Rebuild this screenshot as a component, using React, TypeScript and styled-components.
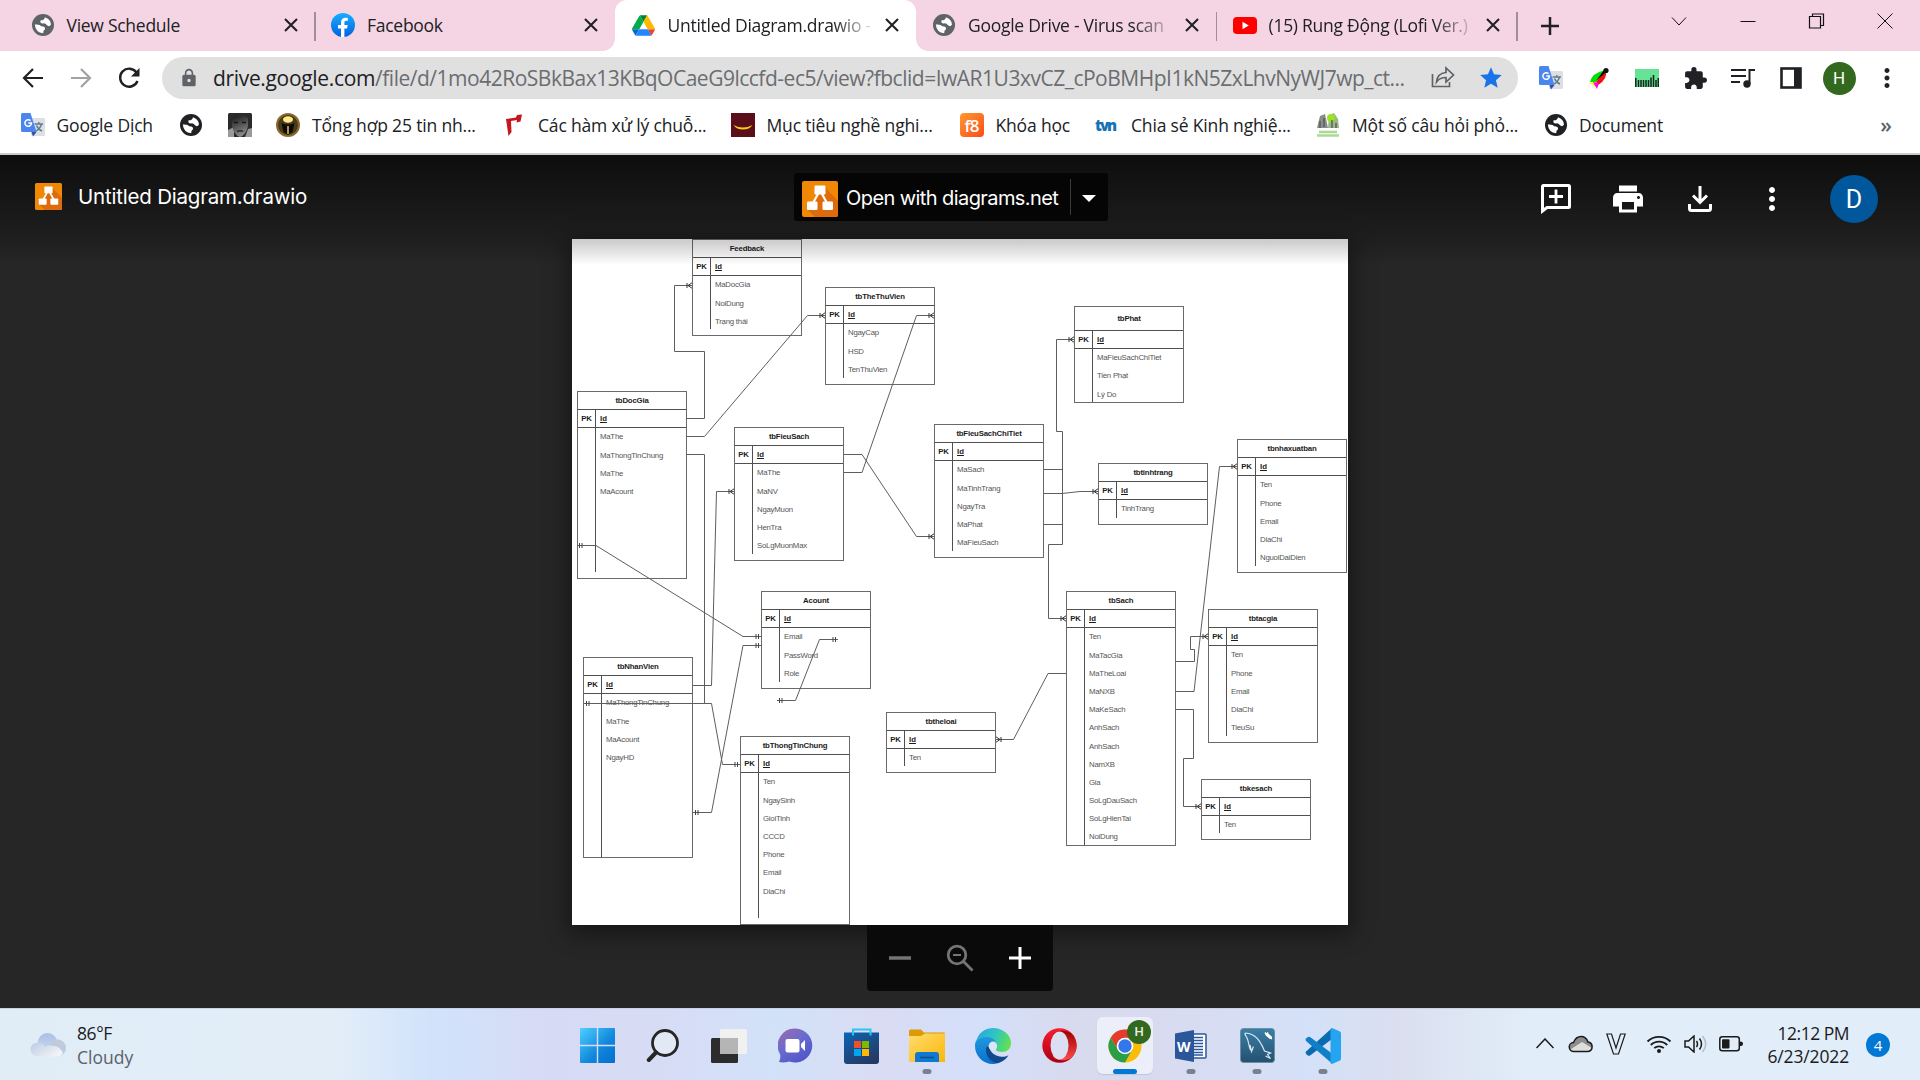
import React from "react";
import styled, { createGlobalStyle, css } from "styled-components";
import { MdExtension, MdLock, MdMoreVert, MdPrint, MdStar } from "react-icons/md";

const UI_FONT = `"Open Sans", "Noto Sans", sans-serif`;

const GlobalStyle = createGlobalStyle`
  * { box-sizing: border-box; }
  body { margin: 0; background: #262626; font-family: ${UI_FONT}; overflow: hidden; }
  svg { display: block; flex: none; }
`;

const Screen = styled.div`
  width: 1920px;
  height: 1080px;
  display: flex;
  flex-direction: column;
`;

/* ---------- Tab strip ---------- */

const TabStrip = styled.div`
  height: 51px;
  flex: none;
  display: flex;
  background: #f5d5e3;
  padding-left: 14px;
  color: #202124;
`;

const TabBox = styled.div<{ $active?: boolean; $divider?: boolean }>`
  position: relative;
  width: 300.5px;
  flex: none;
  display: flex;
  align-items: center;
  padding: 0 17px 1px 16.5px;
  ${(p) =>
    p.$active &&
    css`
      background: #fff;
      border-radius: 12px 12px 0 0;
      &::before,
      &::after {
        content: "";
        position: absolute;
        bottom: 0;
        width: 12px;
        height: 12px;
      }
      &::before {
        left: -12px;
        background: radial-gradient(circle at 0 0, transparent 11.5px, #fff 12px);
      }
      &::after {
        right: -12px;
        background: radial-gradient(circle at 100% 0, transparent 11.5px, #fff 12px);
      }
    `}
  ${(p) =>
    p.$divider &&
    css`
      &::after {
        content: "";
        position: absolute;
        right: -1px;
        top: 12px;
        width: 1.5px;
        height: 29px;
        background: #a18f98;
      }
    `}
`;

const TabIcon = styled.span`
  width: 24px;
  display: flex;
  justify-content: center;
  margin-right: 12px;
  flex: none;
`;

const TabTitle = styled.span<{ $fade?: boolean }>`
  flex: 1;
  font-size: 17.5px;
  letter-spacing: -0.27px;
  line-height: 26px;
  white-space: nowrap;
  ${(p) =>
    p.$fade &&
    css`
      mask-image: linear-gradient(90deg, #000 165px, rgba(0, 0, 0, 0.15) 202px);
    `}
`;

const StripTail = styled.div`
  flex: 1;
  display: flex;
  align-items: center;
  padding-left: 24px;
`;

const WindowButtons = styled.div`
  margin-left: auto;
  display: flex;
  padding: 0 26px 9px 0;
  gap: 50.5px;
`;

const CloseX = () => (
  <svg width="14" height="14" viewBox="0 0 14 14" stroke="#202124" strokeWidth="2.1">
    <path d="M1 1l12 12M13 1L1 13" />
  </svg>
);

/* ---------- Toolbar ---------- */

const Toolbar = styled.div`
  height: 54px;
  flex: none;
  display: flex;
  align-items: center;
  background: #fff;
  padding-left: 21px;
`;

const NavButtons = styled.div`
  display: flex;
  gap: 24px;
  width: 141px;
  flex: none;
`;

const Omnibox = styled.div`
  width: 1356px;
  height: 42px;
  flex: none;
  display: flex;
  align-items: center;
  border-radius: 21px;
  background: #e0e0e0;
  padding-left: 17px;
`;

const Url = styled.span`
  width: 1218px;
  margin-left: 14px;
  font-size: 21px;
  letter-spacing: -0.49px;
  line-height: 30px;
  white-space: nowrap;
  color: #6b6d70;
  b {
    font-weight: 400;
    letter-spacing: -0.33px;
    color: #202124;
  }
`;

const OmniActions = styled.div`
  display: flex;
  gap: 23px;
`;

const Extensions = styled.div`
  display: flex;
  align-items: center;
  margin-left: 9px;
`;

const Slot = styled.span`
  width: 48px;
  flex: none;
  display: flex;
  justify-content: center;
  align-items: center;
`;

const ProfileDot = styled.span`
  width: 33px;
  height: 33px;
  border-radius: 50%;
  background: #33691e;
  color: #fff;
  font: 400 17px/33px Roboto, sans-serif;
  text-align: center;
`;

/* ---------- Bookmarks ---------- */

const Bookmarks = styled.div`
  height: 50px;
  flex: none;
  display: flex;
  align-items: center;
  padding: 0 28px 8px 20.5px;
  gap: 24px;
  background: #fff;
  border-bottom: 2px solid #c9cbc9;
`;

const Bookmark = styled.span<{ $w: number }>`
  width: ${(p) => p.$w}px;
  flex: none;
  display: flex;
  align-items: center;
  gap: 12px;
  font-size: 17.5px;
  letter-spacing: -0.17px;
  line-height: 28px;
  white-space: nowrap;
  color: #202124;
`;

const Chevrons = styled.span`
  margin-left: auto;
  font-size: 21px;
  line-height: 20px;
  font-weight: 600;
  color: #5f6368;
`;

/* ---------- Viewer ---------- */

const Viewer = styled.main`
  position: relative;
  height: 853px;
  flex: none;
  display: flex;
  flex-direction: column;
  align-items: center;
  background: #262626;
`;

const TopShade = styled.div`
  position: absolute;
  z-index: 2;
  inset: 0 0 auto 0;
  height: 110px;
  pointer-events: none;
  background: linear-gradient(rgba(0, 0, 0, 0.65), rgba(0, 0, 0, 0.18) 80%, transparent);
`;

const ViewerHeader = styled.header`
  width: 100%;
  height: 84px;
  flex: none;
  z-index: 3;
  display: grid;
  grid-template-columns: 794px 314px 1fr;
  padding-top: 18px;
  color: #fff;
  font-family: Inter, "Open Sans", sans-serif;
`;

const FileName = styled.div`
  display: flex;
  align-items: center;
  height: 48px;
  padding: 0 0 1px 35px;
  gap: 16px;
  font-size: 20.5px;
  font-weight: 400;
  letter-spacing: -0.2px;
`;

const OpenWith = styled.div`
  height: 48px;
  display: flex;
  align-items: center;
  padding: 4px 8px 0;
  border-radius: 3px;
  background: #050505;
  font-size: 20px;
  font-weight: 400;
  letter-spacing: -0.58px;
  white-space: nowrap;
`;

const OpenLabel = styled.span`
  width: 224px;
  margin-left: 8px;
  line-height: 34px;
  padding-bottom: 2px;
`;

const OpenCaret = styled.span`
  height: 36px;
  margin-bottom: 4px;
  flex: 1;
  display: flex;
  align-items: center;
  padding: 3px 0 0 11px;
  border-left: 1.5px solid #3c3c3c;
`;

const ViewerActions = styled.div`
  display: flex;
  justify-content: flex-end;
  align-items: center;
  height: 52px;
  padding-right: 42px;
`;

const ActionSlot = styled.span`
  width: 72px;
  display: flex;
  justify-content: center;
  padding-bottom: 1px;
`;

const Account = styled.span`
  width: 48px;
  height: 48px;
  margin-left: 22px;
  border-radius: 50%;
  background: #01579b;
  font: 400 25px/49px Roboto, sans-serif;
  text-align: center;
`;

const Page = styled.section`
  position: relative;
  width: 776px;
  height: 686px;
  flex: none;
  overflow: hidden;
  background: #fff;
`;

const PageShadow = styled.div`
  box-shadow: 0 5px 22px 3px rgba(0, 0, 0, 0.45);
`;

const ZoomBar = styled.div`
  width: 186px;
  height: 66px;
  z-index: 1;
  display: flex;
  align-items: center;
  justify-content: space-between;
  padding: 0 22px;
  border-radius: 0 0 4px 4px;
  background: #0a0a0a;
`;

/* ---------- Diagram ---------- */

const Entity = styled.div<{ $x: number; $y: number; $h: number }>`
  position: absolute;
  left: ${(p) => p.$x}px;
  top: ${(p) => p.$y}px;
  width: 110px;
  height: ${(p) => p.$h}px;
  border: 1px solid #6a6a6a;
  display: flex;
  flex-direction: column;
  font: 7.8px/18.3px "Liberation Sans", Arial, sans-serif;
  color: #555;
`;

const EntityTitle = styled.div<{ $h: number }>`
  height: ${(p) => p.$h}px;
  line-height: ${(p) => p.$h}px;
  flex: none;
  text-align: center;
  font-weight: 700;
  font-size: 7.8px;
  letter-spacing: -0.18px;
  color: #1c1c1c;
  border-bottom: 1px solid #505050;
`;

const KeyRow = styled.div`
  height: 18.2px;
  flex: none;
  display: flex;
  font-weight: 700;
  color: #1c1c1c;
  border-bottom: 1px solid #505050;
`;

const KeyCell = styled.span`
  width: 18px;
  text-align: center;
  letter-spacing: -0.2px;
  border-right: 1px solid #505050;
`;

const KeyName = styled.span`
  padding-left: 4px;
  text-decoration: underline;
`;

const Fields = styled.div<{ $h: number }>`
  height: ${(p) => p.$h}px;
  margin-left: 17px;
  padding-left: 4px;
  border-left: 1px solid #505050;
`;

const Field = styled.div`
  height: 18.2px;
  letter-spacing: -0.23px;
`;

const Edges = styled.svg`
  position: absolute;
  inset: 0;
`;

type EntityData = { name: string; x: number; y: number; b: number; fields: string[]; head?: number; full?: boolean };

const ORIGIN_X = 572;
const ORIGIN_Y = 239;

const entities: EntityData[] = [
  { name: "Feedback", x: 692, y: 239, b: 336, fields: ["MaDocGia", "NoiDung", "Trạng thái"] },
  { name: "tbTheThuVien", x: 825, y: 287, b: 385, fields: ["NgayCap", "HSD", "TenThuVien"] },
  { name: "tbDocGia", x: 577, y: 391, b: 579, fields: ["MaThe", "MaThongTinChung", "MaThe", "MaAcount"] },
  { name: "tbFieuSach", x: 734, y: 427, b: 561, fields: ["MaThe", "MaNV", "NgayMuon", "HenTra", "SoLgMuonMax"] },
  { name: "tbFieuSachChiTiet", x: 934, y: 424, b: 558, fields: ["MaSach", "MaTinhTrang", "NgayTra", "MaPhat", "MaFieuSach"] },
  { name: "tbPhat", x: 1074, y: 306, b: 403, head: 24, full: true, fields: ["MaFieuSachChiTiet", "Tiền Phạt", "Lý Do"] },
  { name: "tbtinhtrang", x: 1098, y: 463, b: 525, fields: ["TinhTrang"] },
  { name: "tbnhaxuatban", x: 1237, y: 439, b: 573, fields: ["Ten", "Phone", "Email", "DiaChi", "NguoiDaiDien"] },
  { name: "Acount", x: 761, y: 591, b: 689, fields: ["Email", "PassWord", "Role"] },
  { name: "tbNhanVien", x: 583, y: 657, b: 858, full: true, fields: ["MaThongTinChung", "MaThe", "MaAcount", "NgayHD"] },
  { name: "tbThongTinChung", x: 740, y: 736, b: 925, fields: ["Ten", "NgaySinh", "GioiTinh", "CCCD", "Phone", "Email", "DiaChi"] },
  { name: "tbtheloai", x: 886, y: 712, b: 773, fields: ["Ten"] },
  {
    name: "tbSach", x: 1066, y: 591, b: 846, full: true,
    fields: ["Ten", "MaTacGia", "MaTheLoai", "MaNXB", "MaKeSach", "AnhSach", "AnhSach", "NamXB", "Gia", "SoLgDauSach", "SoLgHienTai", "NoiDung"],
  },
  { name: "tbtacgia", x: 1208, y: 609, b: 743, fields: ["Ten", "Phone", "Email", "DiaChi", "TieuSu"] },
  { name: "tbkesach", x: 1201, y: 779, b: 840, fields: ["Ten"] },
];

const connectors = [
  "686 418.5H704.5V351.5H674.5V285.5H692",
  "686 436.5H704.5L807.5 315.5H825",
  "686 454.5H704.5V703.5H584",
  "584 703.5H711.5L722.5 764.5H740",
  "693 685.5H711.5L716.5 491.5H734",
  "577 545.5H596L743 636.5H761",
  "761 645.5H743L711.5 812.5H693",
  "777 700.5H795.5L819.5 639.5H838",
  "844 454.5H862L916.5 536.5H934",
  "844 472.5H862L916.5 315.5H935",
  "1044 524.5H1062.5V431.5H1056.5V339.5H1074",
  "1044 469.5H1062.5V544.5H1048.5V618.5H1066",
  "1044 493.5H1062L1080 491.5H1098",
  "1066 673.5H1048L1013.5 739.5H996",
  "1176 661.5H1194.5V649.5H1190.5V636.5H1208",
  "1176 691.5H1194L1219.5 466.5H1237",
  "1176 709.5H1193.5V758.5H1183.5V806.5H1201",
];

/* End markers: x, y, and the side the connector arrives from. */
const crowFeet: [number, number, number][] = [
  [692, 285.5, -1], [825, 315.5, -1], [734, 491.5, -1], [934, 536.5, -1], [934, 315.5, -1],
  [1074, 339.5, -1], [1066, 618.5, -1], [1098, 491.5, -1], [996, 739.5, 1], [1208, 636.5, -1],
  [1237, 466.5, -1], [1201, 806.5, -1],
];
const doubleBars: [number, number, number][] = [
  [577, 545.5, 1], [584, 703.5, 1], [740, 764.5, -1], [761, 636.5, -1], [761, 645.5, -1],
  [693, 812.5, 1], [777, 700.5, 1], [838, 639.5, -1],
];

const Diagram = () => (
  <Page>
    {entities.map((e) => {
      const head = e.head ?? 18.2;
      const body = e.b - e.y - 2 - head - 18.2;
      return (
        <Entity key={e.name} $x={e.x - ORIGIN_X} $y={e.y - ORIGIN_Y} $h={e.b - e.y}>
          <EntityTitle $h={head}>{e.name}</EntityTitle>
          <KeyRow>
            <KeyCell>PK</KeyCell>
            <KeyName>Id</KeyName>
          </KeyRow>
          <Fields $h={e.full ? body : body - 5.5}>
            {e.fields.map((f, i) => (
              <Field key={i}>{f}</Field>
            ))}
          </Fields>
        </Entity>
      );
    })}
    <Edges width="776" height="686" viewBox={`${ORIGIN_X} ${ORIGIN_Y} 776 686`} fill="none" stroke="#5e5e5e" strokeWidth="1">
      {connectors.map((d) => (
        <path key={d} d={"M" + d} />
      ))}
      {crowFeet.map(([x, y, s]) => (
        <path key={`c${x}-${y}`} stroke="#333" d={`M${x + s * 5} ${y - 2.5}v5M${x} ${y - 2.7}L${x + s * 4} ${y}L${x} ${y + 2.7}`} />
      ))}
      {doubleBars.map(([x, y, s]) => (
        <path key={`b${x}-${y}`} stroke="#444" d={`M${x + s * 2.5} ${y - 2.5}v5M${x + s * 5} ${y - 2.5}v5`} />
      ))}
    </Edges>
  </Page>
);

/* ---------- Brand icons ---------- */

const GlobeIcon = ({ color }: { color: string }) => (
  <svg width="22" height="22" viewBox="0 0 22 22">
    <circle cx="11" cy="11" r="11" fill={color} />
    <path d="M13 3.200Q18.500 5 19 10.500Q17 13.500 14.800 11Q13.500 9 11 9.400Q7.500 9.500 8.600 6.300Q12.500 6.500 13 3.200z" fill="#fff" />
    <path d="M2.800 10.500Q8 10 9.300 12.300Q13.500 12.500 13 15.200Q10.800 16.500 11.200 19.200Q3.500 18.500 2.800 10.500z" fill="#fff" />
  </svg>
);

const DrawioLogo = ({ size }: { size: number }) => (
  <svg width={size} height={size} viewBox="0 0 36 36">
    <rect width="36" height="36" rx="2" fill="#f08705" />
    <path d="M22 5l14 15v14q0 2-2 2H13l-7-7 7-9z" fill="#df6c0c" />
    <path d="M17 11l-7 13M19 11l7 13" stroke="#fff" strokeWidth="2.2" />
    <rect x="12.5" y="4.500" width="11" height="9" rx="1.200" fill="#fff" />
    <rect x="5" y="20.500" width="10.500" height="8.500" rx="1.200" fill="#fff" />
    <rect x="20.500" y="20.500" width="10.500" height="8.500" rx="1.200" fill="#fff" />
  </svg>
);

const FacebookLogo = () => (
  <svg width="24" height="24" viewBox="0 0 24 24">
    <defs>
      <linearGradient id="fb" x2="0" y2="1">
        <stop stopColor="#19aeff" />
        <stop offset="1" stopColor="#0062e0" />
      </linearGradient>
    </defs>
    <circle cx="12" cy="12" r="12" fill="url(#fb)" />
    <path d="M10 24v-8.500H7V12h3V9.500C10 6.400 11.800 4.800 14.500 4.800c1 0 2.300.2 2.300.2v2.800h-1.500c-1.500 0-1.900.8-1.900 1.800V12h3.300l-.6 3.500h-2.700V24z" fill="#fff" />
  </svg>
);

const DriveLogo = () => (
  <svg width="23" height="23" viewBox="0 0 87.3 78">
    <path d="m6.6 66.850 3.850 6.650c.8 1.400 1.950 2.500 3.300 3.300l13.750-23.800h-27.500c0 1.550.4 3.100 1.200 4.500z" fill="#0066da" />
    <path d="m43.650 25-13.750-23.800c-1.350.8-2.500 1.900-3.300 3.300l-25.400 44a9 9 0 0 0-1.200 4.500h27.500z" fill="#00ac47" />
    <path d="m73.550 76.800c1.350-.8 2.500-1.900 3.300-3.300l1.600-2.750 7.650-13.250c.8-1.400 1.200-2.950 1.200-4.500h-27.500l5.850 11.500z" fill="#ea4335" />
    <path d="m43.650 25 13.750-23.800c-1.350-.8-2.900-1.200-4.500-1.200h-18.500c-1.600 0-3.150.45-4.500 1.200z" fill="#00832d" />
    <path d="m59.800 53h-32.300l-13.750 23.800c1.350.8 2.900 1.200 4.500 1.200h50.800c1.600 0 3.150-.45 4.500-1.200z" fill="#2684fc" />
    <path d="m73.400 26.500-12.700-22c-.8-1.400-1.950-2.500-3.300-3.300l-13.750 23.800 16.150 28h27.450c0-1.550-.4-3.100-1.200-4.500z" fill="#ffba00" />
  </svg>
);

const YouTubeLogo = () => (
  <svg width="24" height="17" viewBox="0 0 24 17">
    <rect width="24" height="17" rx="4" fill="#f00" />
    <path d="M9.500 4.800v7.400l6.300-3.700z" fill="#fff" />
  </svg>
);

const TranslateLogo = () => (
  <svg width="24" height="24" viewBox="0 0 24 24">
    <rect x="10" y="5" width="14" height="18" rx="1.500" fill="#dcdfe3" />
    <path d="M13.500 11h8.500M17.800 9v2M20.500 11c-.6 3-3 5.500-5.500 7M15.500 12.500c.8 2 3 4.500 5.500 5.500" stroke="#607d8b" strokeWidth="1.400" fill="none" />
    <path d="M1.500 0H9.500l6 19H1.500Q0 19 0 17.500v-16Q0 0 1.500 0z" fill="#4a86ee" />
    <path d="M10.500 19h5l-3.500 4.500z" fill="#3949ab" />
    <path d="M9.500 7.600A3.300 3.300 0 1 0 10.500 10H7.300" stroke="#fff" strokeWidth="1.500" fill="none" />
  </svg>
);

const FaceThumb = () => (
  <svg width="24" height="24" viewBox="0 0 24 24">
    <defs>
      <linearGradient id="face" x2=".3" y2="1">
        <stop stopColor="#161616" />
        <stop offset=".5" stopColor="#4e4e4e" />
        <stop offset="1" stopColor="#8a8a8a" />
      </linearGradient>
    </defs>
    <rect width="24" height="24" rx="1.500" fill="#2a2a2a" />
    <path d="M0 17l6-3v10H0zM24 15l-4 1-3 8h7z" fill="#9a9a9a" />
    <path d="M4 5q8-6 16 0v8q-2 9-8 11-6-2-8-11z" fill="url(#face)" />
    <path d="M6 9.500h4M14 9.500h4" stroke="#151515" strokeWidth="1.600" />
    <path d="M9 18.500q3.500-1.500 6 0" stroke="#2c2c2c" strokeWidth="1.500" fill="none" />
  </svg>
);

const BadgeThumb = () => (
  <svg width="24" height="24" viewBox="0 0 24 24">
    <circle cx="12" cy="12" r="12" fill="#8a6a2c" />
    <circle cx="12" cy="12" r="10" fill="#4a3a1a" />
    <ellipse cx="12" cy="6.500" rx="5" ry="3.200" fill="#ffe98a" />
    <path d="M5.500 10q6.500 3 13 0l-2 9-4.500 3-4.500-3z" fill="#0b0a08" />
    <path d="M12 13v8" stroke="#c4a050" strokeWidth="1.800" />
  </svg>
);

const RedFlag = () => (
  <svg width="24" height="24" viewBox="0 0 24 24">
    <path d="M4 6l10-1.500 1-2.500 5-.5-1.500 7-4 1 .5-2.500-6 1 .5 11-3 4z" fill="#c4161c" />
  </svg>
);

const Maroon = () => (
  <svg width="24" height="24" viewBox="0 0 24 24">
    <rect width="24" height="24" fill="#5c0d1a" />
    <path d="M2.500 12q9.500 5 19 0q-3 4.600-9.500 4.600t-9.500-4.600z" fill="#f3cf10" />
  </svg>
);

const LetterTile = styled.span`
  width: 24px;
  height: 24px;
  flex: none;
  border-radius: 4px;
  background: linear-gradient(135deg, #ff9a2e, #fb4b1c);
  color: #fff;
  font: 600 17px/25px "Open Sans", sans-serif;
  letter-spacing: -1px;
  text-align: center;
`;

const TvnMark = styled.span`
  width: 24px;
  flex: none;
  color: #1672b5;
  font: 800 15px/24px "Open Sans", sans-serif;
  letter-spacing: -2px;
`;

const CoupleThumb = () => (
  <svg width="24" height="24" viewBox="0 0 24 24">
    <path d="M1 15L4 3l5-2 3 14z" fill="#898e8a" />
    <path d="M12 15l1-13 5-2 4 6 1 9z" fill="#9ab78b" />
    <circle cx="15" cy="5" r="4" fill="#9be322" />
    <path d="M4 8v7M8 5v9M16 7v8M20 10v5" stroke="#555" strokeWidth="1.300" />
    <path d="M3 19h18M1 22.500h22" stroke="#a8da94" strokeWidth="2.500" />
  </svg>
);

/* ---------- Taskbar ---------- */

const Taskbar = styled.footer`
  height: 72px;
  flex: none;
  display: grid;
  grid-template-columns: 564px 793px 1fr;
  border-top: 1.500px solid #c8d2e2;
  background: linear-gradient(90deg, #e0edf7 0, #e2edf8 340px, #d1e3fb 430px, #d7daf4 550px, #d7dcf5 660px, #d2e2f9 775px, #d9dcf3 880px, #d4dffa 980px, #d8daed 1080px, #d8dcf2 1200px, #d4e1f8 1310px, #dbdff0 1400px, #e1edf8 1530px, #e1edf8);
`;

const Weather = styled.div`
  display: flex;
  align-items: center;
  padding: 0 0 0 30px;
  gap: 12px;
  font-size: 17.5px;
  line-height: 24.500px;
  color: #1b1b1b;
  letter-spacing: -0.4px;
`;

const WeatherText = styled.div`
  display: flex;
  flex-direction: column;
  padding-top: 1px;
  margin-left: -1px;
  span + span {
    color: #5c6268;
    letter-spacing: 0;
  }
`;

const Apps = styled.nav`
  display: flex;
`;

const AppSlot = styled.span<{ $state?: "open" | "active" }>`
  position: relative;
  width: 56px;
  height: 57px;
  margin: 8px 5px 0;
  flex: none;
  display: flex;
  align-items: center;
  justify-content: center;
  border-radius: 6px;
  ${(p) =>
    p.$state === "active" &&
    css`
      background: #eceffa;
      box-shadow: 0 1px 1px #c0c6da;
    `}
  ${(p) =>
    p.$state &&
    css`
      &::after {
        content: "";
        position: absolute;
        bottom: 0;
        left: 50%;
        transform: translateX(-50%);
        width: ${p.$state === "active" ? 24 : 9}px;
        height: 5px;
        border-radius: 3px;
        background: ${p.$state === "active" ? "#0078d4" : "#7a808c"};
      }
    `}
`;

const AppBadge = styled.span`
  position: absolute;
  right: 2px;
  top: 3px;
  width: 24px;
  height: 24px;
  border-radius: 50%;
  background: #33691e;
  color: #e8f0e4;
  font: 500 13px/24px Roboto, sans-serif;
  text-align: center;
`;

const Tray = styled.div`
  display: flex;
  align-items: center;
  justify-content: flex-end;
  padding: 0 30px 0 0;
`;

const TrayIcons = styled.div`
  display: flex;
  align-items: center;
  gap: 11px;
  padding-bottom: 2px;
`;

const Clock = styled.div`
  width: 106px;
  display: flex;
  flex-direction: column;
  align-items: flex-end;
  margin-right: 17px;
  font-size: 17.5px;
  line-height: 23px;
  letter-spacing: -0.5px;
  color: #1b1b1b;
  span + span {
    letter-spacing: -0.15px;
  }
`;

const Notice = styled.span`
  width: 24px;
  height: 24px;
  border-radius: 50%;
  background: #0078d4;
  color: #fff;
  font-size: 15px;
  line-height: 24px;
  text-align: center;
`;

const StartIcon = () => (
  <svg width="35" height="35" viewBox="0 0 35 35">
    <defs>
      <linearGradient id="win" x2="1" y2="1">
        <stop stopColor="#4cd0ff" />
        <stop offset=".6" stopColor="#1086dc" />
        <stop offset="1" stopColor="#0070cc" />
      </linearGradient>
    </defs>
    <path d="M1 0h15.800v16.800H0V1q0-1 1-1zM18.200 0H34q1 0 1 1v15.800H18.200zM0 18.200h16.800V35H1q-1 0-1-1zM18.200 18.200H35V34q0 1-1 1H18.200z" fill="url(#win)" />
  </svg>
);

const SearchIcon = () => (
  <svg width="34" height="36" viewBox="0 0 34 36" fill="none" stroke="#262626">
    <circle cx="19" cy="15" r="12.500" strokeWidth="2.800" fill="#e3e8f5" />
    <path d="M10 24.500L2.800 32" strokeWidth="4" strokeLinecap="round" />
  </svg>
);

const TaskViewIcon = () => (
  <svg width="36" height="34" viewBox="0 0 36 34">
    <rect x="0" y="9" width="27" height="25" rx="1.500" fill="#2c2c2c" />
    <rect x="9" y="0" width="27" height="25" rx="1.500" fill="#f1f1f1" />
    <path d="M9 9h18v16H10.500Q9 25 9 23.500z" fill="#b5b5b5" />
  </svg>
);

const ChatIcon = () => (
  <svg width="35" height="35" viewBox="0 0 35 35">
    <defs>
      <linearGradient id="chat" x1="0" y1="0" x2=".7" y2="1">
        <stop stopColor="#a06aa8" />
        <stop offset=".5" stopColor="#6a6bd0" />
        <stop offset="1" stopColor="#5055c8" />
      </linearGradient>
    </defs>
    <path d="M17.500.5a17 17 0 1 1-6 33Q5 35 1 34q2-4 1-8A17 17 0 0 1 17.500.5z" fill="url(#chat)" />
    <rect x="7.500" y="11" width="14" height="13.500" rx="2" fill="#fff" />
    <path d="M23 16l4-4v11l-4-4z" fill="#fff" />
  </svg>
);

const StoreIcon = () => (
  <svg width="35" height="36" viewBox="0 0 35 36">
    <defs>
      <linearGradient id="store" x2=".6" y2="1">
        <stop stopColor="#0c64b4" />
        <stop offset="1" stopColor="#243a66" />
      </linearGradient>
    </defs>
    <path d="M0 4.500h35V33q0 3-3 3H3q-3 0-3-3z" fill="url(#store)" />
    <path d="M9 7.500V1.500h17.500v6" fill="none" stroke="#29c5f6" strokeWidth="2" />
    <path d="M10 13h7v7h-7z" fill="#f25022" />
    <path d="M18 13h7v7h-7z" fill="#7fba00" />
    <path d="M10 21h7v7h-7z" fill="#00a4ef" />
    <path d="M18 21h7v7h-7z" fill="#ffb900" />
  </svg>
);

const ExplorerIcon = () => (
  <svg width="36" height="33" viewBox="0 0 36 33">
    <defs>
      <linearGradient id="folder" x2="1" y2="1">
        <stop stopColor="#ffdc6e" />
        <stop offset="1" stopColor="#fbb70a" />
      </linearGradient>
    </defs>
    <path d="M0 2q0-1.500 1.500-1.500H12l3 3h20q1 0 1 1V10H0z" fill="#dc9a08" />
    <path d="M0 7h12l4-2.500h20V33H0z" fill="url(#folder)" />
    <path d="M6 33v-7q0-3 3-3h18q3 0 3 3v7z" fill="#0f78d0" />
    <path d="M11 28.500h14" stroke="#0a4c8c" strokeWidth="1.500" />
  </svg>
);

const EdgeIcon = () => (
  <svg width="36" height="36" viewBox="0 0 36 36">
    <defs>
      <linearGradient id="edge1" x1="0" y1=".3" x2="1" y2=".6">
        <stop stopColor="#28a8e6" />
        <stop offset=".5" stopColor="#30c5c0" />
        <stop offset="1" stopColor="#62e24c" />
      </linearGradient>
      <linearGradient id="edge2" x1="0" x2="0" y2="1">
        <stop stopColor="#1f9ade" />
        <stop offset="1" stopColor="#0a6fd0" />
      </linearGradient>
    </defs>
    <path d="M.5 14C3 10 8 8.500 12 8.500c6 0 10 4 10 8-3-3-7-2-8 2-2 6 2 14 9 16.500-2 .8-4 1-5 1C8 36 0 28 0 18q0-2 .5-4z" fill="url(#edge2)" />
    <path d="M11 20c-1 7 4 14.500 12 15.200 5-1.500 8.500-4.500 10.500-8-7 3.500-17 1-19.500-8.200-1-1-2.500-.5-3 1z" fill="#114a8b" />
    <circle cx="18" cy="18" r="4.400" fill="#dce6f5" />
    <path d="M1 14C3 5 10 0 18 0c10 0 18 7 18 15 0 6-4 9-9 9-4 0-6-1-6-2.500 0-1 1.500-1.500 1-4.500-1-5-5-8-10-8s-9 2-11 5z" fill="url(#edge1)" />
  </svg>
);

const OperaIcon = () => (
  <svg width="35" height="35" viewBox="0 0 35 35">
    <defs>
      <linearGradient id="op" x2="0" y2="1">
        <stop stopColor="#ff1b2d" />
        <stop offset="1" stopColor="#a70014" />
      </linearGradient>
      <linearGradient id="op2" x2="0" y2="1">
        <stop stopColor="#9c0000" />
        <stop offset="1" stopColor="#ff4b4b" />
      </linearGradient>
    </defs>
    <circle cx="17.500" cy="17.500" r="17.200" fill="url(#op)" />
    <path d="M11 6C17 1.500 23 2 29 5a17 17 0 0 1 0 25c-6 3-12 3.500-18-1z" fill="url(#op2)" />
    <ellipse cx="17.500" cy="17.500" rx="9" ry="14" fill="#dadff2" />
  </svg>
);

const ChromeIcon = () => (
  <svg width="34" height="34" viewBox="0 0 34 34">
    <circle cx="17" cy="17" r="16.500" fill="#fbbc05" />
    <path d="M2.700 8.700A16.500 16.500 0 0 1 31.300 8.800H17L10 21z" fill="#e33b2e" />
    <path d="M2.700 8.700A16.500 16.500 0 0 0 17 33.500L24 21H10z" fill="#2a9f47" />
    <circle cx="17" cy="17" r="8.300" fill="#fff" />
    <circle cx="17" cy="17" r="6.700" fill="#3477ec" />
  </svg>
);

const WordBox = styled.span`
  position: relative;
  width: 32px;
  height: 32px;
  color: #fff;
`;

const WordLetter = styled.span`
  position: absolute;
  left: 2px;
  top: 0;
  font: 700 14px/33px "Open Sans", sans-serif;
`;

const WordIcon = () => (
  <WordBox>
    <svg width="32" height="32" viewBox="0 0 32 32">
      <rect x="14" y="4" width="17" height="24" rx="1" fill="#fff" stroke="#2b579a" strokeWidth="1.500" />
      <path d="M18 7.500h10M18 10.500h10M18 13.500h10M18 16.500h10M18 19.500h10M18 22.500h10M18 25h10" stroke="#2b579a" strokeWidth="1.300" />
      <path d="M0 3.500L19 0v32L0 28.500z" fill="#2b579a" />
    </svg>
    <WordLetter>W</WordLetter>
  </WordBox>
);

const WorkbenchIcon = () => (
  <svg width="35" height="35" viewBox="0 0 35 35" fill="none">
    <defs>
      <linearGradient id="wb" x2="0" y2="1">
        <stop stopColor="#3a7fa8" />
        <stop offset="1" stopColor="#245070" />
      </linearGradient>
    </defs>
    <rect x=".5" y=".5" width="34" height="34" rx="3" fill="url(#wb)" stroke="#6d8fa3" />
    <path d="M10.500 22c-2-4-1.500-8-3.500-12-1-2-3-4.500-1.500-5 3.500 0 6 1 9 3 5 3.500 8 10 10 15l6 2-3 1.500 3 4-5-2.500M10 17l1.500 6.500 2-5" stroke="#dbe7ee" strokeWidth="1.200" />
    <path d="M27 6.500l3.500 3" stroke="#fff" strokeWidth="3" strokeLinecap="round" />
    <path d="M25 4.500l1.500 2 1.500-2M30 9.500l2 1.500" stroke="#fff" strokeWidth="1.500" />
  </svg>
);

const CodeIcon = () => (
  <svg width="36" height="36" viewBox="0 0 36 36">
    <path d="M1 24.500q-1 1.500.3 2.700l1.600 1.300q1.200.7 2.500-.2L27 12V1z" fill="#0a6cb0" transform="translate(0 -1)" />
    <path d="M1 11.500q-1-1.500.3-2.700l1.600-1.300q1.200-.7 2.500.2L27 24v10z" fill="#0f7fc8" transform="translate(0 1.500)" />
    <path d="M27 0l8 3.500q1 .5 1 2v25q0 1.500-1 2L27 36q-1.500-.5-1.500-1.500v-33Q25.500.5 27 0z" fill="#25a5f1" />
  </svg>
);

const AppsList = () => (
  <Apps>
    <AppSlot><StartIcon /></AppSlot>
    <AppSlot><SearchIcon /></AppSlot>
    <AppSlot><TaskViewIcon /></AppSlot>
    <AppSlot><ChatIcon /></AppSlot>
    <AppSlot><StoreIcon /></AppSlot>
    <AppSlot $state="open"><ExplorerIcon /></AppSlot>
    <AppSlot><EdgeIcon /></AppSlot>
    <AppSlot><OperaIcon /></AppSlot>
    <AppSlot $state="active">
      <ChromeIcon />
      <AppBadge>H</AppBadge>
    </AppSlot>
    <AppSlot $state="open"><WordIcon /></AppSlot>
    <AppSlot $state="open"><WorkbenchIcon /></AppSlot>
    <AppSlot $state="open"><CodeIcon /></AppSlot>
  </Apps>
);

export default function App() {
  return (
    <Screen>
      <GlobalStyle />
      <TabStrip>
        <TabBox $divider>
          <TabIcon><GlobeIcon color="#5f6368" /></TabIcon>
          <TabTitle>View Schedule</TabTitle>
          <CloseX />
        </TabBox>
        <TabBox>
          <TabIcon><FacebookLogo /></TabIcon>
          <TabTitle>Facebook</TabTitle>
          <CloseX />
        </TabBox>
        <TabBox $active>
          <TabIcon><DriveLogo /></TabIcon>
          <TabTitle $fade>Untitled Diagram.drawio -</TabTitle>
          <CloseX />
        </TabBox>
        <TabBox $divider>
          <TabIcon><GlobeIcon color="#5f6368" /></TabIcon>
          <TabTitle $fade>Google Drive - Virus scan</TabTitle>
          <CloseX />
        </TabBox>
        <TabBox $divider>
          <TabIcon><YouTubeLogo /></TabIcon>
          <TabTitle $fade>(15) Rung Động (Lofi Ver.)</TabTitle>
          <CloseX />
        </TabBox>
        <StripTail>
          <svg width="18" height="18" viewBox="0 0 18 18" stroke="#202124" strokeWidth="2.500">
            <path d="M9 0v18M0 9h18" />
          </svg>
          <WindowButtons>
            <svg width="18" height="16" viewBox="0 0 18 16" fill="none" stroke="#111">
              <path d="M1 4.500l7 7.500 7-7.500" />
            </svg>
            <svg width="18" height="16" viewBox="0 0 18 16" stroke="#111">
              <path d="M1.500 8.500h15" />
            </svg>
            <svg width="18" height="16" viewBox="0 0 18 16" fill="none" stroke="#111" strokeWidth="1.200">
              <path d="M1.500 3.500h11v11.500h-11zM4.500 3.500V1h11v11.500h-3" />
            </svg>
            <svg width="18" height="16" viewBox="0 0 18 16" stroke="#111">
              <path d="M1.500 .500l15 15M16.500 .500l-15 15" />
            </svg>
          </WindowButtons>
        </StripTail>
      </TabStrip>

      <Toolbar>
        <NavButtons>
          <svg width="24" height="24" viewBox="0 0 24 24" fill="none" stroke="#202124" strokeWidth="2.200">
            <path d="M22 12H3M12 3l-9 9 9 9" />
          </svg>
          <svg width="24" height="24" viewBox="0 0 24 24" fill="none" stroke="#a0a2a5" strokeWidth="2.200">
            <path d="M2 12h19M12 3l9 9-9 9" />
          </svg>
          <svg width="24" height="24" viewBox="0 0 24 24" fill="none" stroke="#202124" strokeWidth="2.400">
            <path d="M19.500 6.500A9 9 0 1 0 20.500 15" />
            <path d="M22.500 2v8.500H14z" fill="#202124" stroke="none" />
          </svg>
        </NavButtons>
        <Omnibox>
          <MdLock size={20} color="#5f6368" />
          <Url>
            <b>drive.google.com</b>/file/d/1mo42RoSBkBax13KBqOCaeG9lccfd-ec5/view?fbclid=IwAR1U3xvCZ_cPoBMHpI1kN5ZxLhvNyWJ7wp_ct...
          </Url>
          <OmniActions>
            <svg width="24" height="24" viewBox="0 0 24 24" fill="none" stroke="#5f6368" strokeWidth="1.700">
              <path d="M1.500 9v12.500h17V17" />
              <path d="M5.500 17C6 11 9.500 8 15 7.500V3l7.500 7-7.500 7v-4.500c-4 0-7 1-9.500 4.500z" />
            </svg>
            <MdStar size={26} color="#1a73e8" />
          </OmniActions>
        </Omnibox>
        <Extensions>
          <Slot><TranslateLogo /></Slot>
          <Slot>
            <svg width="22" height="22" viewBox="0 0 22 22">
              <path d="M2 15Q4 6 17 3L8 15z" fill="#00e000" />
              <path d="M8 15L18 3q2 9-8 15z" fill="#f0100c" />
              <path d="M1 16l7-1 2 3-1 3q-4-3-8-5z" fill="#fff200" />
              <path d="M5 15l6 1-2 6z" fill="#f0f" />
              <path d="M8 14L16 3l2 2z" fill="#000" />
              <circle cx="18" cy="3.500" r="2.600" fill="#111" />
            </svg>
          </Slot>
          <Slot>
            <svg width="24" height="18" viewBox="0 0 24 18">
              <rect width="24" height="18" fill="#66e394" />
              <path d="M.8 18V9M3.500 18v-7M6 18v-7M8.500 18v-7M11 18v-7M13.500 18v-7M16 18V8.500M18.500 18V6M21 18v-7M23.300 18V9" stroke="#12251a" strokeWidth="1.500" />
            </svg>
          </Slot>
          <Slot><MdExtension size={25} color="#202124" /></Slot>
          <Slot>
            <svg width="24" height="20" viewBox="0 0 24 20" fill="none" stroke="#202124" strokeWidth="2">
              <path d="M0 2h15M0 8h15M0 14h9M18.500 16V2H24" />
              <circle cx="16" cy="16" r="2.700" fill="#202124" />
            </svg>
          </Slot>
          <Slot>
            <svg width="22" height="22" viewBox="0 0 22 22">
              <rect x="1.500" y="1.500" width="19" height="19" fill="#fff" stroke="#202124" strokeWidth="2.600" />
              <rect x="14" y="1" width="7" height="20" fill="#202124" />
            </svg>
          </Slot>
          <Slot><ProfileDot>H</ProfileDot></Slot>
          <Slot><MdMoreVert size={30} color="#202124" /></Slot>
        </Extensions>
      </Toolbar>

      <Bookmarks>
        <Bookmark $w={135.5}><TranslateLogo />Google Dịch</Bookmark>
        <Bookmark $w={24}><GlobeIcon color="#202124" /></Bookmark>
        <Bookmark $w={24}><FaceThumb /></Bookmark>
        <Bookmark $w={202}><BadgeThumb />Tổng hợp 25 tin nh...</Bookmark>
        <Bookmark $w={204.5}><RedFlag />Các hàm xử lý chuỗ...</Bookmark>
        <Bookmark $w={205}><Maroon />Mục tiêu nghề nghi...</Bookmark>
        <Bookmark $w={111.5}><LetterTile>f8</LetterTile>Khóa học</Bookmark>
        <Bookmark $w={197}><TvnMark>tvn</TvnMark>Chia sẻ Kinh nghiệ...</Bookmark>
        <Bookmark $w={205}><CoupleThumb />Một số câu hỏi phỏ...</Bookmark>
        <Bookmark $w={120}><GlobeIcon color="#202124" />Document</Bookmark>
        <Chevrons>»</Chevrons>
      </Bookmarks>

      <Viewer>
        <TopShade />
        <ViewerHeader>
          <FileName>
            <DrawioLogo size={27} />
            Untitled Diagram.drawio
          </FileName>
          <OpenWith>
            <DrawioLogo size={36} />
            <OpenLabel>Open with diagrams.net</OpenLabel>
            <OpenCaret>
              <svg width="14" height="7" viewBox="0 0 14 7" fill="#fff"><path d="M0 0h14L7 7z" /></svg>
            </OpenCaret>
          </OpenWith>
          <ViewerActions>
            <ActionSlot>
              <svg width="30" height="30" viewBox="0 0 30 30" fill="none" stroke="#fff" strokeWidth="3">
                <path d="M1.500 27V2.500q0-1 1-1h25q1 0 1 1v20q0 1-1 1H6z" />
                <path d="M15 5.500v14M8 12.500h14" strokeWidth="2.800" />
              </svg>
            </ActionSlot>
            <ActionSlot><MdPrint size={36} /></ActionSlot>
            <ActionSlot>
              <svg width="24" height="26" viewBox="0 0 24 26" fill="none" stroke="#fff" strokeWidth="3">
                <path d="M12 0v16M5 9.500l7 7 7-7M1.500 18v4.500q0 2 2 2h17q2 0 2-2V18" />
              </svg>
            </ActionSlot>
            <ActionSlot><MdMoreVert size={36} /></ActionSlot>
            <Account>D</Account>
          </ViewerActions>
        </ViewerHeader>
        <PageShadow>
          <Diagram />
        </PageShadow>
        <ZoomBar>
          <svg width="22" height="22" viewBox="0 0 22 22" stroke="#757575" strokeWidth="3.500"><path d="M0 11h22" /></svg>
          <svg width="28" height="28" viewBox="0 0 28 28" fill="none" stroke="#757575" strokeWidth="2.800">
            <circle cx="11" cy="11" r="8.800" />
            <path d="M7 11h8" strokeWidth="2" />
            <path d="M17.500 17.500l9 9" />
          </svg>
          <svg width="22" height="22" viewBox="0 0 22 22" stroke="#fff" strokeWidth="3"><path d="M0 11h22M11 0v22" /></svg>
        </ZoomBar>
      </Viewer>

      <Taskbar>
        <Weather>
          <svg width="36" height="24" viewBox="0 0 36 24">
            <defs>
              <linearGradient id="cl1" x2="0" y2="1"><stop stopColor="#a8c0e8" /><stop offset="1" stopColor="#cfd9ea" /></linearGradient>
              <linearGradient id="cl2" x2="1" y2=".6"><stop stopColor="#bccce4" /><stop offset="1" stopColor="#f1f3f7" /></linearGradient>
            </defs>
            <circle cx="17.500" cy="10" r="10" fill="url(#cl1)" />
            <circle cx="27.500" cy="15" r="8.500" fill="#bfcbdc" />
            <path d="M7.500 9.500Q13 9.500 15 14q3-3 8-1 6-1 10 7-2 3.500-6 3.500H7.500a7 7 0 0 1 0-14z" fill="url(#cl2)" />
          </svg>
          <WeatherText>
            <span>86°F</span>
            <span>Cloudy</span>
          </WeatherText>
        </Weather>
        <AppsList />
        <Tray>
          <TrayIcons>
            <svg width="18" height="11" viewBox="0 0 18 11" fill="none" stroke="#1b1b1b" strokeWidth="1.500"><path d="M.5 10L9 1l8.500 9" /></svg>
            <svg width="30" height="18" viewBox="-4 0 30 18">
              <path d="M5 16.500a4.500 4.500 0 0 1-.5-9Q7 1.500 12 1.500T19 7a4.800 4.800 0 0 1 0 9.500z" fill="#8e8e8e" />
              <path d="M2 14l11-7 10 6q-1 3.500-4 3.500H5q-2 0-3-2.500z" fill="#dedede" />
              <path d="M5 16.500a4.500 4.500 0 0 1-.5-9Q7 1.500 12 1.500T19 7a4.800 4.800 0 0 1 0 9.500z" fill="none" stroke="#1b1b1b" strokeWidth="1.500" />
            </svg>
            <svg width="20" height="22" viewBox="0 0 20 22" fill="none" stroke="#1b1b1b" strokeWidth="1.200">
              <path d="M.8 1H5.500L10 15 14.500 1H19.200L12.500 21h-5z" />
            </svg>
            <svg width="36" height="20" viewBox="-10 0 36 20" fill="none" stroke="#1b1b1b" strokeWidth="1.800">
              <path d="M.5 7.500a16.500 16.500 0 0 1 23 0M3.800 11a11.500 11.500 0 0 1 16.400 0M7.200 14.200a7 7 0 0 1 9.600 0" />
              <circle cx="12" cy="17" r="2" fill="#1b1b1b" stroke="none" />
            </svg>
            <svg width="24" height="18" viewBox="0 0 24 18" fill="none" stroke="#1b1b1b" strokeWidth="1.500">
              <path d="M1 6h3.500L10 1v16l-5.500-5H1zM12.500 6q2 3 0 6M15.500 3.500q4 5.500 0 11" />
              <path d="M18.500 1q6.500 8 0 16" stroke="#b4bdc8" />
            </svg>
            <svg width="24" height="16" viewBox="0 0 24 16">
              <rect x=".8" y=".8" width="19.500" height="14" rx="2.500" fill="none" stroke="#1b1b1b" strokeWidth="1.500" />
              <rect x="3" y="3.200" width="7.500" height="9.300" rx="1" fill="#1b1b1b" />
              <path d="M21 5.500q3 0 3 2.300t-3 2.300z" fill="#1b1b1b" />
            </svg>
          </TrayIcons>
          <Clock>
            <span>12:12 PM</span>
            <span>6/23/2022</span>
          </Clock>
          <Notice>4</Notice>
        </Tray>
      </Taskbar>
    </Screen>
  );
}
